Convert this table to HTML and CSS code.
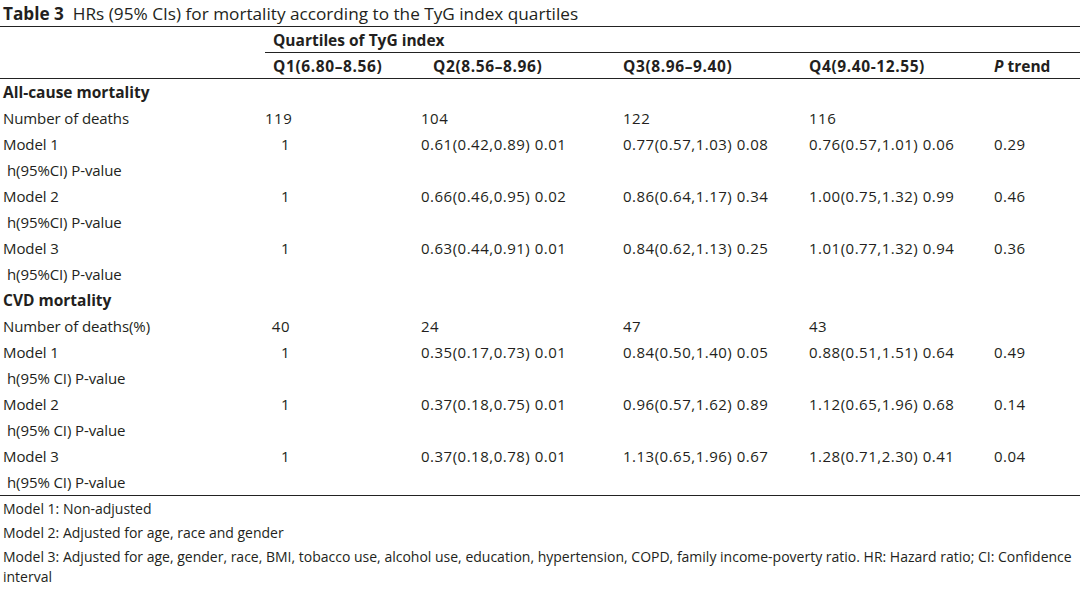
FILE: index.html
```html
<!DOCTYPE html>
<html>
<head>
<meta charset="utf-8">
<link rel="stylesheet" href="styles.css">
</head>
<body>
<div class="page">
  <div class="caption"><b>Table 3</b>&nbsp; HRs (95% CIs) for mortality according to the TyG index quartiles</div>
  <table class="tbl">
    <colgroup>
      <col class="c0"><col class="c1"><col class="c2"><col class="c3"><col class="c4"><col class="c5">
    </colgroup>
    <thead>
      <tr class="hq">
        <th></th>
        <th colspan="5" class="quart">Quartiles of TyG index</th>
      </tr>
      <tr class="hc">
        <th></th>
        <th class="q1h">Q1(6.80–8.56)</th>
        <th class="q2h">Q2(8.56–8.96)</th>
        <th>Q3(8.96–9.40)</th>
        <th>Q4(9.40-12.55)</th>
        <th class="ph"><i>P</i> trend</th>
      </tr>
    </thead>
    <tbody>
      <tr><td class="sec">All-cause mortality</td><td></td><td></td><td></td><td></td><td></td></tr>
      <tr><td>Number of deaths</td><td class="q1">119</td><td>104</td><td>122</td><td>116</td><td></td></tr>
      <tr><td>Model 1</td><td class="q1">1</td><td>0.61(0.42,0.89) 0.01</td><td>0.77(0.57,1.03) 0.08</td><td>0.76(0.57,1.01) 0.06</td><td>0.29</td></tr>
      <tr><td class="sub">h(95%CI) P-value</td><td></td><td></td><td></td><td></td><td></td></tr>
      <tr><td>Model 2</td><td class="q1">1</td><td>0.66(0.46,0.95) 0.02</td><td>0.86(0.64,1.17) 0.34</td><td>1.00(0.75,1.32) 0.99</td><td>0.46</td></tr>
      <tr><td class="sub">h(95%CI) P-value</td><td></td><td></td><td></td><td></td><td></td></tr>
      <tr><td>Model 3</td><td class="q1">1</td><td>0.63(0.44,0.91) 0.01</td><td>0.84(0.62,1.13) 0.25</td><td>1.01(0.77,1.32) 0.94</td><td>0.36</td></tr>
      <tr><td class="sub">h(95%CI) P-value</td><td></td><td></td><td></td><td></td><td></td></tr>
      <tr><td class="sec">CVD mortality</td><td></td><td></td><td></td><td></td><td></td></tr>
      <tr><td>Number of deaths(%)</td><td class="q1">40</td><td>24</td><td>47</td><td>43</td><td></td></tr>
      <tr><td>Model 1</td><td class="q1">1</td><td>0.35(0.17,0.73) 0.01</td><td>0.84(0.50,1.40) 0.05</td><td>0.88(0.51,1.51) 0.64</td><td>0.49</td></tr>
      <tr><td class="sub">h(95% CI) P-value</td><td></td><td></td><td></td><td></td><td></td></tr>
      <tr><td>Model 2</td><td class="q1">1</td><td>0.37(0.18,0.75) 0.01</td><td>0.96(0.57,1.62) 0.89</td><td>1.12(0.65,1.96) 0.68</td><td>0.14</td></tr>
      <tr><td class="sub">h(95% CI) P-value</td><td></td><td></td><td></td><td></td><td></td></tr>
      <tr><td>Model 3</td><td class="q1">1</td><td>0.37(0.18,0.78) 0.01</td><td>1.13(0.65,1.96) 0.67</td><td>1.28(0.71,2.30) 0.41</td><td>0.04</td></tr>
      <tr class="last"><td class="sub">h(95% CI) P-value</td><td></td><td></td><td></td><td></td><td></td></tr>
    </tbody>
  </table>
  <div class="notes">
    <p>Model 1: Non-adjusted</p>
    <p>Model 2: Adjusted for age, race and gender</p>
    <p>Model 3: Adjusted for age, gender, race, BMI, tobacco use, alcohol use, education, hypertension, COPD, family income-poverty ratio. HR: Hazard ratio; CI: Confidence interval</p>
  </div>
</div>
</body>
</html>
```

FILE: styles.css
```css
html, body {
  margin: 0;
  padding: 0;
  background: #ffffff;
}
body {
  font-family: "Open Sans", "Noto Sans", "Liberation Sans", sans-serif;
  color: #231f20;
  font-size: 14px;
}
.page {
  width: 1080px;
}
.caption {
  height: 26px;
  line-height: 27px;
  font-size: 17.2px;
  padding-left: 3px;
  border-bottom: 1px solid #222;
  white-space: nowrap;
}
.caption b {
  font-weight: 700;
}
.tbl {
  width: 1080px;
  border-collapse: collapse;
  table-layout: fixed;
  font-size: 15px;
}
.c0 { width: 265px; }
.c1 { width: 156px; }
.c2 { width: 202px; }
.c3 { width: 186px; }
.c4 { width: 185px; }
.c5 { width: 86px; }
.tbl th, .tbl td {
  padding: 0;
  text-align: left;
  white-space: nowrap;
  vertical-align: middle;
}
.tbl th {
  font-weight: 700;
  font-size: 15.5px;
}
.hq th {
  height: 25px;
}
.hq th.quart {
  padding-left: 8px;
  border-bottom: 1px solid #222;
}
.hc th {
  height: 25px;
  border-bottom: 1px solid #222;
  letter-spacing: 0.6px;
}
.hc th.ph {
  letter-spacing: 0;
}
.hc th.q1h { padding-left: 8px; }
.hc th.q2h { padding-left: 12px; }
.tbl td {
  height: 26px;
  letter-spacing: 0.5px;
}
.tbl td:first-child {
  padding-left: 3px;
  letter-spacing: -0.1px;
}
.tbl td.sub {
  padding-left: 7px;
}
.tbl td.sec {
  font-weight: 700;
  font-size: 15.5px;
  letter-spacing: 0;
}
.tbl td.q1 {
  text-align: right;
  padding-right: 131px;
}
.tbl tr.last td {
  border-bottom: 1px solid #222;
}
.notes {
  padding-left: 3px;
}
.notes p {
  margin: 4px 0 0 0;
  line-height: 20px;
}
.notes p:first-child {
  margin-top: 3px;
}
```
